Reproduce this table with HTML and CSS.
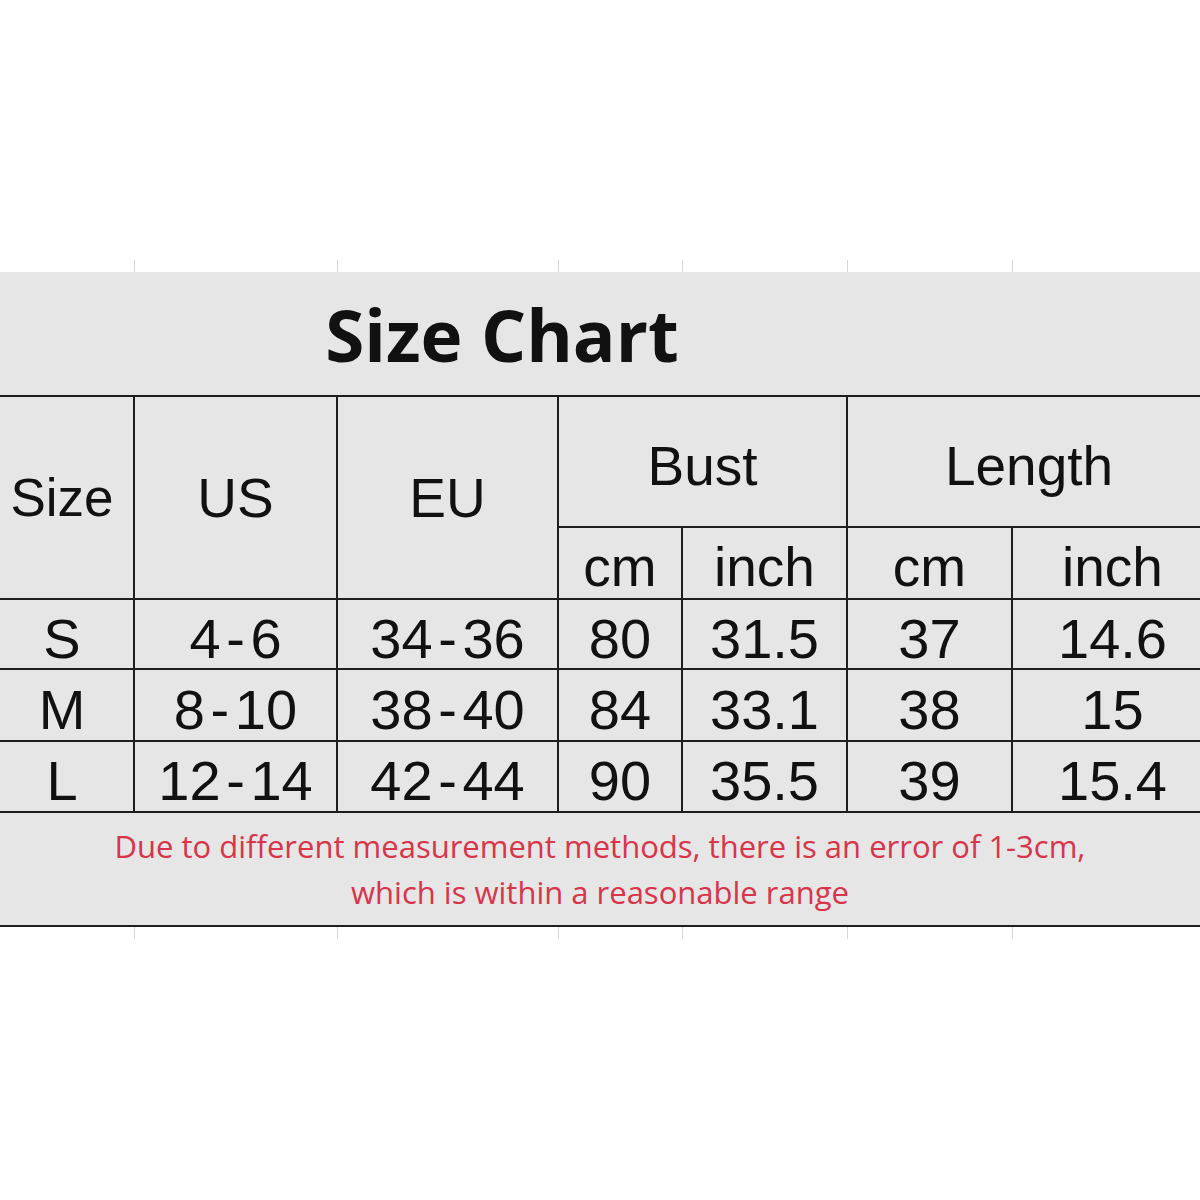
FILE: index.html
```html
<!DOCTYPE html>
<html>
<head>
<meta charset="utf-8">
<title>Size Chart</title>
<link rel="stylesheet" href="styles.css">
</head>
<body>
<div class="page">
  <div class="ticks">
    <span></span><span></span><span></span><span></span><span></span><span></span><span class="last"></span>
  </div>
  <div class="chart">
    <div class="cell title">Size Chart</div>

    <div class="cell head tall first">Size</div>
    <div class="cell head tall">US</div>
    <div class="cell head tall">EU</div>
    <div class="cell head group">Bust</div>
    <div class="cell head group length">Length</div>
    <div class="cell head sub">cm</div>
    <div class="cell head sub">inch</div>
    <div class="cell head sub">cm</div>
    <div class="cell head sub lastcol">inch</div>

    <div class="cell data first">S</div>
    <div class="cell data">4<span class="dash">-</span>6</div>
    <div class="cell data">34<span class="dash">-</span>36</div>
    <div class="cell data">80</div>
    <div class="cell data">31.5</div>
    <div class="cell data">37</div>
    <div class="cell data lastcol">14.6</div>

    <div class="cell data first">M</div>
    <div class="cell data">8<span class="dash">-</span>10</div>
    <div class="cell data">38<span class="dash">-</span>40</div>
    <div class="cell data">84</div>
    <div class="cell data">33.1</div>
    <div class="cell data">38</div>
    <div class="cell data lastcol">15</div>

    <div class="cell data first">L</div>
    <div class="cell data">12<span class="dash">-</span>14</div>
    <div class="cell data">42<span class="dash">-</span>44</div>
    <div class="cell data">90</div>
    <div class="cell data">35.5</div>
    <div class="cell data">39</div>
    <div class="cell data lastcol">15.4</div>

    <div class="cell note">
      <p>Due to different measurement methods, there is an error of 1-3cm,</p>
      <p>which is within a reasonable range</p>
    </div>
  </div>
  <div class="ticks">
    <span></span><span></span><span></span><span></span><span></span><span></span><span class="last"></span>
  </div>
</div>
</body>
</html>
```

FILE: styles.css
```css
html, body {
  margin: 0;
  padding: 0;
  background: #ffffff;
}

.page {
  width: 1200px;
  padding-top: 260px;
}

.ticks {
  display: grid;
  grid-template-columns: 133px 201px 219px 122px 163px 163px 187px;
  column-gap: 2px;
  height: 12px;
}

.ticks span {
  border-right: 1px solid #d6d6d6;
  margin-right: -2px;
}

.ticks span.last {
  border-right: none;
}

.chart {
  display: grid;
  grid-template-columns: 133px 201px 219px 122px 163px 163px 187px;
  grid-template-rows: 123px 129px 70px 68px 70px 69px 112px;
  gap: 2px;
  background: #1e1e1e;
  border-bottom: 2px solid #1e1e1e;
}

.cell {
  background: #e7e6e7;
  display: flex;
  align-items: center;
  justify-content: center;
  color: #111111;
  font-family: "Liberation Sans", Arial, sans-serif;
}

.title {
  grid-column: 1 / 8;
  font-family: "Open Sans", "Noto Sans", sans-serif;
  font-weight: 700;
  font-size: 71px;
  padding-top: 2px;
  padding-right: 196px;
  letter-spacing: 0;
}

.head {
  font-size: 55px;
  font-weight: 400;
}

.tall {
  grid-row: 2 / 4;
  padding-top: 0;
}

.group {
  grid-column: span 2;
  padding-top: 8px;
}

.length {
  padding-left: 10px;
}

.sub {
  padding-top: 8px;
}

.data {
  font-size: 56px;
  padding-top: 8px;
}

.first {
  padding-right: 9px;
}

.head.first {
  font-size: 53px;
}

.lastcol {
  padding-left: 12px;
}

.dash {
  margin: 0 0.1em;
}

.note {
  grid-column: 1 / 8;
  flex-direction: column;
  font-family: "Open Sans", "Noto Sans", sans-serif;
  font-size: 31px;
  color: #d8344a;
  line-height: 46px;
  padding-top: 0;
}

.note p {
  margin: 0;
}
```
